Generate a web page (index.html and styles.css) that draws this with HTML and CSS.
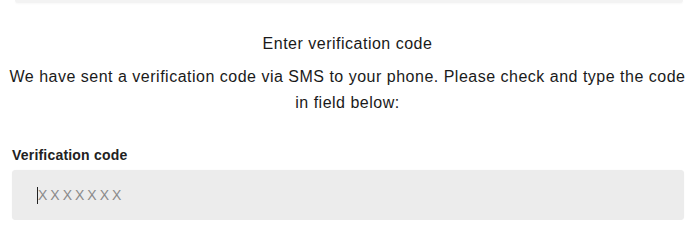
FILE: index.html
```html
<!DOCTYPE html>
<html>
<head>
<meta charset="utf-8">
<link rel="stylesheet" href="styles.css">
</head>
<body>
<div class="page">
  <div class="prev-field"></div>
  <h2 class="title">Enter verification code</h2>
  <p class="desc">We have sent a verification code via SMS to your phone. Please check and type the code in field below:</p>
  <label class="label" for="code">Verification code</label>
  <div class="input"><span class="caret"></span><span class="placeholder">XXXXXXX</span></div>
</div>
</body>
</html>
```
FILE: styles.css
```css
html, body { margin: 0; padding: 0; background: #fff; }
body { font-family: "Liberation Sans", Arial, sans-serif; color: #1a1a1a; }
.page { width: 673px; margin-left: 11px; display: flex; flex-direction: column; }
.prev-field { height: 3px; margin: 0 1px 0 4px; background: #f3f3f3; border-radius: 0 0 4px 4px; box-shadow: 0 1px 2px rgba(0,0,0,0.03); }
.title { margin: 31px 0 0; font-size: 16px; font-weight: normal; text-align: center; line-height: 20px; letter-spacing: 0.5px; }
.desc { margin: 10px -4px 0; font-size: 16px; text-align: center; line-height: 26px; letter-spacing: 0.5px; }
.label { margin: 30px 0 0 1px; font-size: 14px; font-weight: bold; line-height: 18px; color: #222; letter-spacing: 0.2px; }
.input { margin: 6px 0 0 1px; height: 50px; background: #ececec; border-radius: 4px; display: flex; align-items: center; padding-left: 25px; box-shadow: 0 0 1px rgba(0,0,0,0.08); }
.caret { width: 1px; height: 17px; background: #222; }
.placeholder { font-size: 14px; color: #8a8a8a; letter-spacing: 3px; }
```
